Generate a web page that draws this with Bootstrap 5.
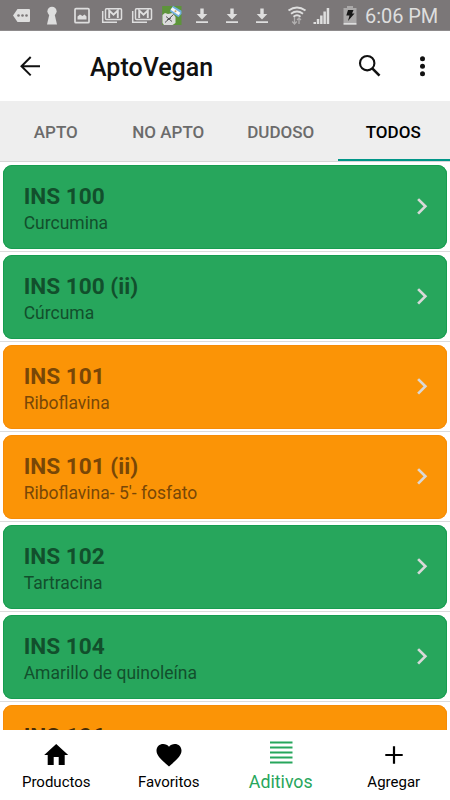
<!DOCTYPE html>
<html lang="es">
<head>
<meta charset="utf-8">
<meta name="viewport" content="width=device-width, initial-scale=1">
<title>AptoVegan</title>
<link href="https://cdn.jsdelivr.net/npm/bootstrap@5.3.0/dist/css/bootstrap.min.css" rel="stylesheet">
<style>
body{font-family:Roboto,"Liberation Sans",sans-serif;color:#111;background:#fff;height:800px}
svg{display:block;flex:none}
.status{height:31px;background:#7b7778;color:#dedede;padding-left:7px;border-bottom:1px solid #8e8b8c}
.clock{font-size:20px;line-height:30px;margin-left:0;padding-top:2px;letter-spacing:-.05px;white-space:nowrap}
.topbar{height:70px;padding-left:15px}
.brand{font-size:25px;font-weight:500;line-height:30px;margin:4px 0 0 45px}
.tabs{height:61px;background:#eee;border-bottom:1px solid #d6d6d6}
.tabs .nav-link{height:60px;padding:2px 1px 0 0;font-size:17px;font-weight:500;line-height:58px;letter-spacing:.03px;color:#6b6b6b;border-radius:0;white-space:nowrap}
.tabs .nav-link.active{color:#000;background:none;border-bottom:2px solid #009688}
.rows{height:568px}
.entry{height:90px;flex:none;padding:2.600px 3px 2.400px 2.700px;border-bottom:1px solid #dcdcdc}
.tile{height:84px;border-radius:9px;padding:0 12px 0 21px}
.good{background:#27a65c;color:#124f2c;box-shadow:inset 0 0 0 1px #179d50}
.doubt{background:#fb9406;color:#784706;box-shadow:inset 0 0 0 1px #f58c08}
.code{font-size:22.600px;font-weight:700;line-height:26px;margin-top:5px}
.desc{font-size:17.500px;line-height:22px;margin-top:2px}
.partial .code{color:#462c08}
.bottom{height:70px;color:#000;font-size:15px}
.bottom .label{line-height:18px;margin-top:2px}
.bottom .label-low{margin-top:-1px}
.bottom .chosen{color:#27a65c;font-size:17.800px;margin-top:3px;padding-right:1px}
</style>
<script src="https://cdn.jsdelivr.net/npm/bootstrap@5.3.0/dist/js/bootstrap.bundle.min.js"></script>
</head>
<body class="d-flex flex-column overflow-hidden">
<svg width="0" height="0" class="position-absolute">
<defs>
<symbol id="mail" viewBox="0 0 30 30"><path d="M5.700 11v11.300H20" fill="none" stroke="#dedede" stroke-width="1.500"/><rect x="8.500" y="8.700" width="16" height="10.800" rx="1" fill="none" stroke="#dedede" stroke-width="1.500"/><path d="M12.200 18V10.500l4.300 4.200 4.300-4.200V18" fill="none" stroke="#dedede" stroke-width="1.900"/></symbol>
<symbol id="down" viewBox="0 0 30 30"><path d="M13.300 8.500h3.400V14h3.600L15 19.500 9.700 14h3.600zM9 21.300h12V23H9z" fill="#dedede"/></symbol>
<symbol id="next" viewBox="0 0 24 24"><path d="M8.400 4.700l6.700 6.700-6.700 6.700" fill="none" stroke="#d8d8d8" stroke-width="2.500"/></symbol>
</defs>
</svg>
<header class="status d-flex align-items-center flex-shrink-0">
<svg width="30" height="30"><path d="M6 15.500L10.500 9H22q1 0 1 1v11q0 1-1 1H10.500z" fill="#dedede"/><g fill="#7b7778"><circle cx="11.500" cy="15.500" r="1.300"/><circle cx="15.500" cy="15.500" r="1.300"/><circle cx="19.500" cy="15.500" r="1.300"/></g></svg>
<svg width="30" height="30"><circle cx="15" cy="11.300" r="4.600" fill="#dedede"/><path d="M12.700 13h4.600L20 24.500H10z" fill="#dedede"/></svg>
<svg width="30" height="30"><rect x="8" y="8.700" width="14" height="14" rx="1" fill="none" stroke="#dedede" stroke-width="1.700"/><path d="M10.500 19.500v-3l2.500-2 2.500 1.500 2-1.500 2 2v3z" fill="#dedede"/></svg>
<svg width="30" height="30"><use href="#mail"/></svg>
<svg width="30" height="30"><use href="#mail"/></svg>
<svg width="30" height="30"><path d="M5.200 6h19.300v19H5.200z" fill="#5d943a"/><path d="M5.500 15l2.500-2 3 1 4.500-1 3 4v6l-3 2H7l-1.500-2z" fill="#ddd"/><path d="M8 22.500l8.500-8M9 16.500l6 5m-5-1.500l4-2" fill="none" stroke="#444" stroke-width=".9"/><path d="M16 5.800l8.500 5v3l-3 3.500-8.700-6z" fill="#70aee0"/><path d="M14.500 8.500l8 5.500" stroke="#f7f7f7" stroke-width="3"/><circle cx="18.500" cy="11.300" r="1" fill="#c8a35b"/></svg>
<svg width="30" height="30"><use href="#down"/></svg>
<svg width="30" height="30"><use href="#down"/></svg>
<svg width="30" height="30"><use href="#down"/></svg>
<svg width="34" height="30"><g fill="none" stroke="#dedede" stroke-width="1.900"><path d="M11.500 10.500Q20 4.500 28.500 10.500M14 13.700Q20 9.300 26 13.700M16.500 16.700Q20 14 23.500 16.700"/></g><path d="M17.500 17v7m-2.300-2.500l2.300 2.500 2.300-2.500M22 24v-6m-2 2l2-2 2 2" fill="none" stroke="#b1afaf" stroke-width="1.300"/></svg>
<svg width="28" height="30"><path d="M2.500 22h2.500v2H2.500zm3.300-3h2.500v5H5.800zm3.300-3.500h2.500V24H9.100zm3.300-4h2.500V24h-2.500zM15.700 8h2.500v16h-2.500z" fill="#dedede"/></svg>
<svg width="26" height="30"><path d="M8 6h6v2h3.500v14h-13V8H8z" fill="#aaa8a8"/><path d="M4.500 22.500h13v2.200h-13z" fill="#dedede"/><path d="M9 10h5.500L13 13.500h2.500L9 21l1.500-5.500H7.300z" fill="#171717"/></svg>
<span class="clock">6:06 PM</span>
</header>
<nav class="topbar d-flex align-items-center flex-shrink-0">
<svg width="30" height="30"><path d="M25 15.200H6.500m9.200-9.200L6.500 15.200l9.200 9.200" fill="none" stroke="#111" stroke-width="2"/></svg>
<h1 class="brand">AptoVegan</h1>
<svg class="ms-auto" width="30" height="30"><circle cx="12.200" cy="12.200" r="7.200" fill="none" stroke="#111" stroke-width="2.100"/><path d="M17.500 17.700l7 7" stroke="#111" stroke-width="2.600"/></svg>
<svg class="ms-4" width="41" height="30"><g fill="#111"><circle cx="13.500" cy="7.800" r="2.500"/><circle cx="13.500" cy="15.200" r="2.500"/><circle cx="13.500" cy="22.700" r="2.500"/></g></svg>
</nav>
<ul class="tabs nav nav-fill flex-nowrap flex-shrink-0">
<li class="nav-item col-3"><a class="nav-link" href="#">APTO</a></li>
<li class="nav-item col-3"><a class="nav-link" href="#">NO APTO</a></li>
<li class="nav-item col-3"><a class="nav-link" href="#">DUDOSO</a></li>
<li class="nav-item col-3"><a class="nav-link active" href="#">TODOS</a></li>
</ul>
<main class="rows d-flex flex-column overflow-hidden flex-shrink-0">
<div class="entry"><div class="tile good d-flex align-items-center justify-content-between"><div><div class="code">INS 100</div><div class="desc">Curcumina</div></div><svg width="26" height="26"><use href="#next"/></svg></div></div>
<div class="entry"><div class="tile good d-flex align-items-center justify-content-between"><div><div class="code">INS 100 (ii)</div><div class="desc">Cúrcuma</div></div><svg width="26" height="26"><use href="#next"/></svg></div></div>
<div class="entry"><div class="tile doubt d-flex align-items-center justify-content-between"><div><div class="code">INS 101</div><div class="desc">Riboflavina</div></div><svg width="26" height="26"><use href="#next"/></svg></div></div>
<div class="entry"><div class="tile doubt d-flex align-items-center justify-content-between"><div><div class="code">INS 101 (ii)</div><div class="desc">Riboflavina- 5'- fosfato</div></div><svg width="26" height="26"><use href="#next"/></svg></div></div>
<div class="entry"><div class="tile good d-flex align-items-center justify-content-between"><div><div class="code">INS 102</div><div class="desc">Tartracina</div></div><svg width="26" height="26"><use href="#next"/></svg></div></div>
<div class="entry"><div class="tile good d-flex align-items-center justify-content-between"><div><div class="code">INS 104</div><div class="desc">Amarillo de quinoleína</div></div><svg width="26" height="26"><use href="#next"/></svg></div></div>
<div class="entry"><div class="tile doubt partial d-flex align-items-center justify-content-between"><div><div class="code">INS 106</div><div class="desc">&nbsp;</div></div></div></div>
</main>
<footer class="bottom row g-0 text-center flex-shrink-0">
<div class="col-3 d-flex flex-column align-items-center pt-2"><svg width="30" height="32" class="mt-1"><path d="M15.200 2L27.200 13h-3.500v10h-6v-8h-5v8h-6V13h-3.500z" fill="#000"/></svg><span class="label label-low">Productos</span></div>
<div class="col-3 d-flex flex-column align-items-center pt-2"><svg width="30" height="32" class="mt-1"><path d="M15 24.500L13.300 23C6.500 17 2.500 13.300 2.500 8.500 2.500 4.700 5.500 2 9.200 2 11.500 2 13.700 3 15 4.700 16.300 3 18.500 2 20.800 2 24.500 2 27.500 4.700 27.500 8.500c0 4.800-4 8.500-10.800 14.500z" fill="#000"/></svg><span class="label label-low">Favoritos</span></div>
<div class="col-3 d-flex flex-column align-items-center pt-2"><svg width="30" height="32"><path d="M4 4.500h22.500M4 9.500h22.500M4 14.500h22.500M4 19.500h22.500M4 24.500h22.500" stroke="#27a65c" stroke-width="2"/></svg><span class="label chosen">Aditivos</span></div>
<div class="col-3 d-flex flex-column align-items-center pt-2"><svg width="30" height="32" class="mt-1"><path d="M15 4.300v17.400M6.300 13h17.400" stroke="#000" stroke-width="2.200"/></svg><span class="label label-low">Agregar</span></div>
</footer>
</body>
</html>
